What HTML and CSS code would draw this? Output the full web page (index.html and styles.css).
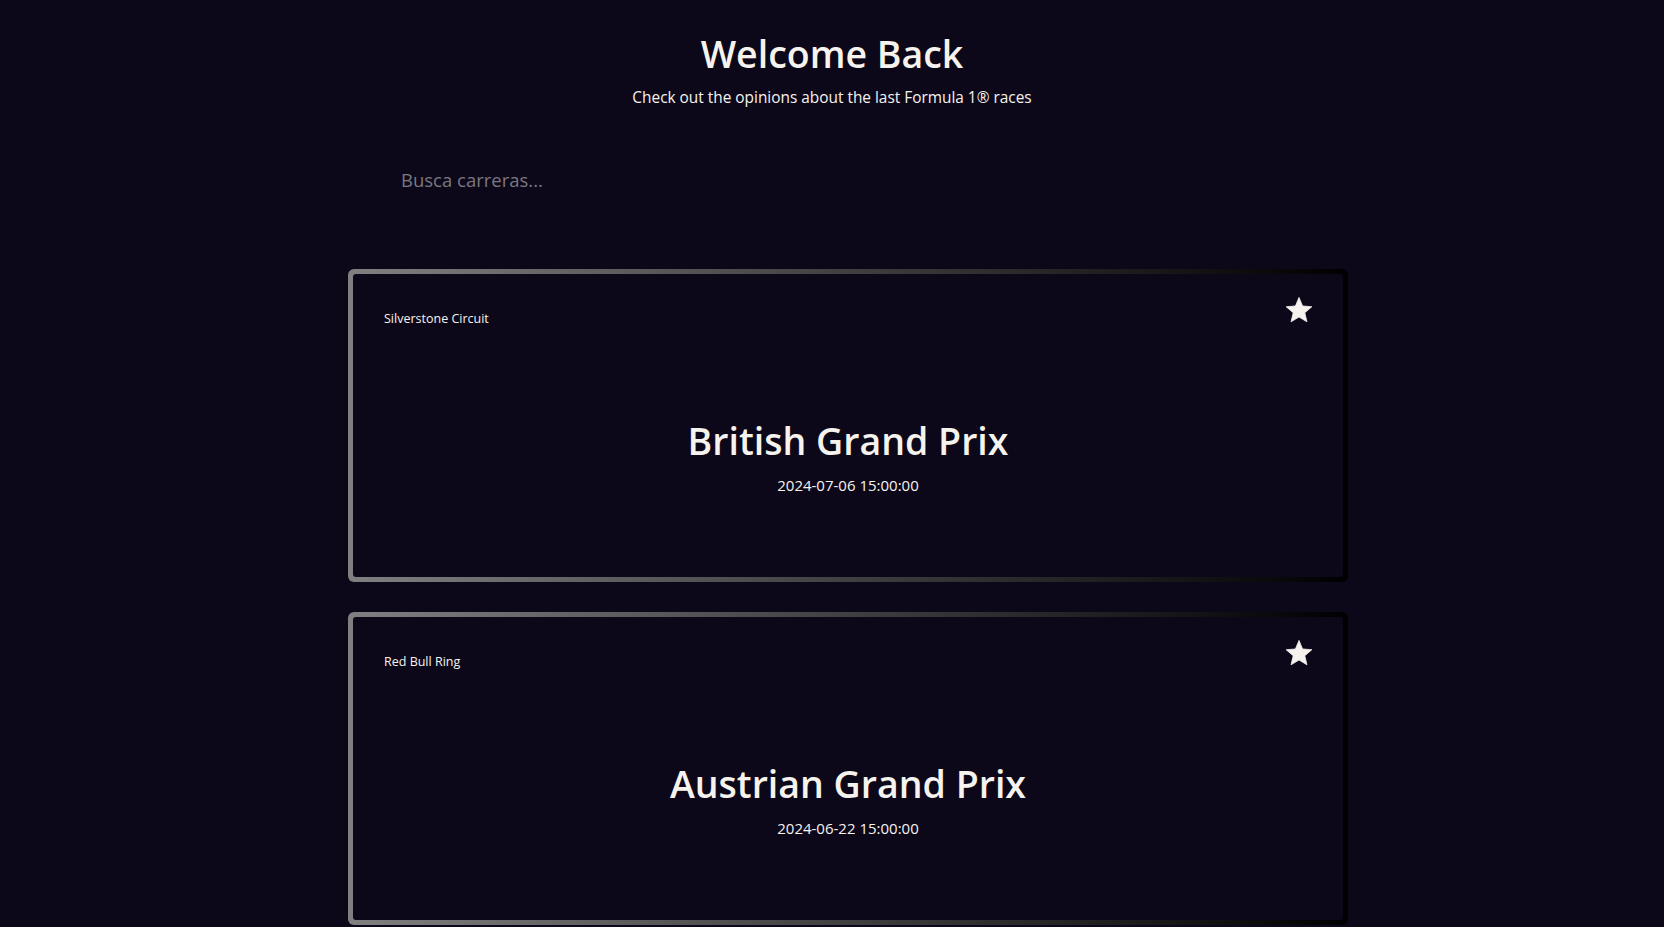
FILE: index.html
```html
<!DOCTYPE html>
<html lang="en">
<head>
<meta charset="utf-8">
<title>Welcome Back</title>
<link rel="stylesheet" href="styles.css">
</head>
<body>
<header class="hero">
  <h1 class="hero-title">Welcome Back</h1>
  <p class="hero-sub">Check out the opinions about the last Formula 1® races</p>
</header>
<div class="search">
  <input class="search-input" type="text" placeholder="Busca carreras...">
</div>
<ul class="races">
  <li class="card">
    <div class="card-inner">
      <div class="card-top">
        <span class="circuit">Silverstone Circuit</span>
        <svg class="star" viewBox="0 0 26 26" width="26" height="26"><polygon points="13,0.4 16.59,8.97 25.84,9.73 18.80,15.79 20.94,24.82 13,20 5.06,24.82 7.20,15.79 0.16,9.73 9.41,8.97" fill="#f6f3ee" stroke="#f6f3ee" stroke-width="0.8" stroke-linejoin="round"/></svg>
      </div>
      <div class="card-body">
        <h2 class="race-name">British Grand Prix</h2>
        <p class="race-date">2024-07-06 15:00:00</p>
      </div>
    </div>
  </li>
  <li class="card">
    <div class="card-inner">
      <div class="card-top">
        <span class="circuit">Red Bull Ring</span>
        <svg class="star" viewBox="0 0 26 26" width="26" height="26"><polygon points="13,0.4 16.59,8.97 25.84,9.73 18.80,15.79 20.94,24.82 13,20 5.06,24.82 7.20,15.79 0.16,9.73 9.41,8.97" fill="#f6f3ee" stroke="#f6f3ee" stroke-width="0.8" stroke-linejoin="round"/></svg>
      </div>
      <div class="card-body">
        <h2 class="race-name">Austrian Grand Prix</h2>
        <p class="race-date">2024-06-22 15:00:00</p>
      </div>
    </div>
  </li>
</ul>
</body>
</html>
```

FILE: styles.css
```css
* { box-sizing: border-box; }

html, body {
  margin: 0;
  padding: 0;
  background: #0d0819;
  color: #f6f3ee;
  font-family: "Open Sans", "Noto Sans", sans-serif;
}

body { overflow: hidden; }

.hero {
  text-align: center;
}

.hero-title {
  margin: 30px 0 0;
  font-size: 37.5px;
  line-height: 48px;
  font-weight: 600;
}

.hero-sub {
  margin: 8px 0 0;
  font-size: 15.4px;
  line-height: 24px;
}

.search {
  width: 1032px;
  margin: 45px auto 0;
  padding-left: 85px;
}

.search-input {
  display: block;
  width: 600px;
  height: 48px;
  padding: 0;
  border: none;
  outline: none;
  background: transparent;
  color: #f6f3ee;
  font-family: inherit;
  font-size: 18.5px;
}

.search-input::placeholder {
  color: #7a7780;
}

.races {
  list-style: none;
  width: 1032px;
  margin: 66px auto 0;
  padding: 0 0 0 32px;
  display: flex;
  flex-direction: column;
  gap: 30px;
}

.card {
  height: 313px;
  padding: 5px;
  border-radius: 6px;
  background: linear-gradient(to right, #808080, #000000);
}

.card-inner {
  height: 100%;
  border-radius: 3px;
  background: #0d0819;
  padding: 23px 31px 0 31px;
}

.card-top {
  display: flex;
  justify-content: space-between;
  align-items: flex-end;
  height: 26px;
}

.circuit {
  font-size: 12.5px;
  line-height: 13px;
  margin-bottom: -2px;
}

.star { display: block; }

.card-body {
  text-align: center;
}

.race-name {
  margin: 94px 0 0;
  font-size: 37.5px;
  line-height: 48px;
  font-weight: 600;
}

.race-date {
  margin: 8px 0 0;
  font-size: 15px;
  line-height: 24px;
}
```
